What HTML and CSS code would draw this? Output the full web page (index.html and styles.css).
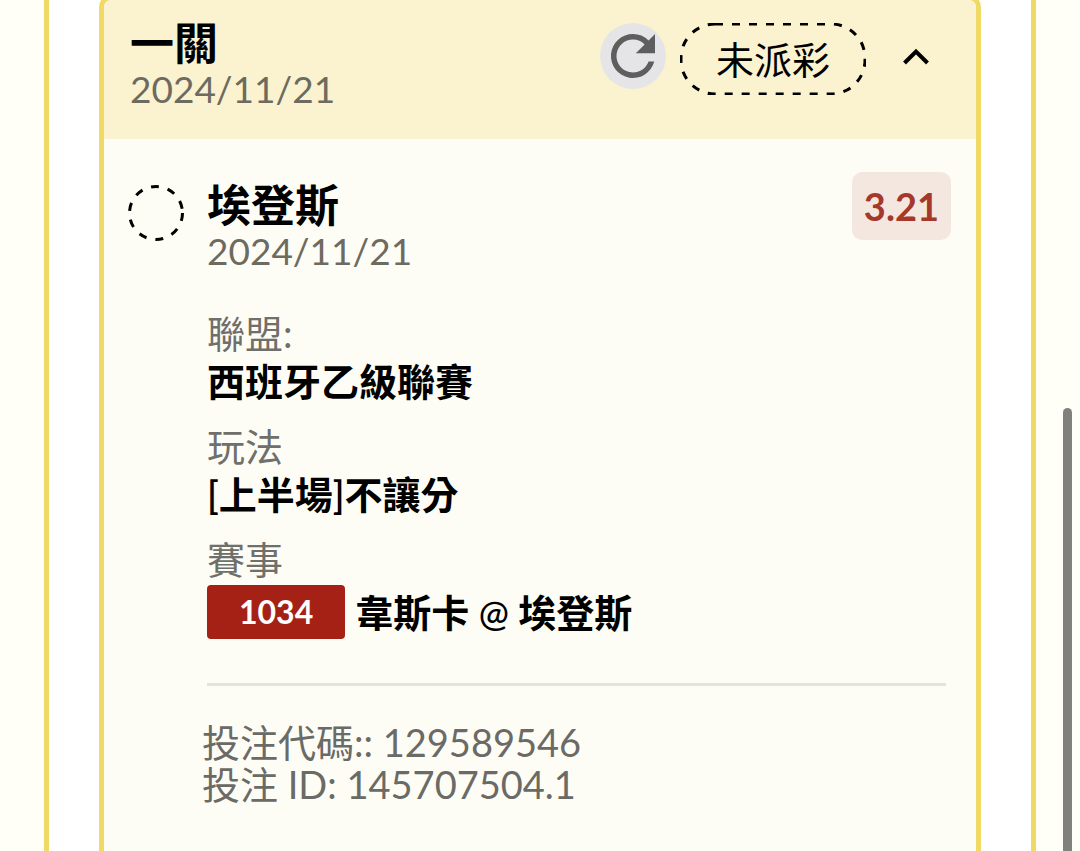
FILE: index.html
```html
<!DOCTYPE html>
<html lang="zh-Hant">
<head>
<meta charset="utf-8">
<meta name="viewport" content="width=device-width, initial-scale=1">
<title>一關</title>
<link rel="stylesheet" href="styles.css">
</head>
<body>
<main class="panel">
  <article class="card">
    <header class="card-head">
      <div class="heading">
        <h1 class="title">一關</h1>
        <p class="date">2024/11/21</p>
      </div>
      <div class="actions">
        <button class="refresh" type="button" aria-label="重新整理">
          <svg width="66" height="66" viewBox="0 0 24 24" aria-hidden="true">
            <path class="refresh-shape" d="M17.650 6.350A7.958 7.958 0 0 0 12 4a8 8 0 1 0 7.730 10h-2.080A6 6 0 1 1 12 6c1.660 0 3.140.69 4.220 1.780L13 11h7V4z"/>
          </svg>
        </button>
        <span class="status">
          <svg class="status-outline" aria-hidden="true"><rect class="dashes" x="1" y="1" rx="34" ry="34"/></svg>
          未派彩
        </span>
        <button class="toggle" type="button" aria-label="收合">
          <svg width="28" height="20" viewBox="0 0 28 20" aria-hidden="true"><path class="chevron" d="M2.500 16L14 4.500L25.500 16"/></svg>
        </button>
      </div>
    </header>
    <section class="bet">
      <svg class="pending" width="56" height="56" viewBox="0 0 56 56" aria-hidden="true"><circle class="pending-ring" cx="28" cy="28" r="26.500"/></svg>
      <div class="details">
        <div class="bet-head">
          <div class="heading">
            <h2 class="title">埃登斯</h2>
            <p class="date">2024/11/21</p>
          </div>
          <span class="odds">3.21</span>
        </div>
        <dl class="fields">
          <div class="field"><dt class="label">聯盟:</dt><dd class="value">西班牙乙級聯賽</dd></div>
          <div class="field"><dt class="label">玩法</dt><dd class="value">[上半場]不讓分</dd></div>
          <div class="field"><dt class="label">賽事</dt><dd class="value match"><span class="code">1034</span><span class="teams">韋斯卡 <span class="at">@</span> 埃登斯</span></dd></div>
        </dl>
        <hr class="rule">
        <div class="reference">
          <p class="line">投注代碼:: 129589546</p>
          <p class="line">投注 ID: 145707504.1</p>
        </div>
      </div>
    </section>
  </article>
</main>
<div class="scroll-thumb"></div>
</body>
</html>
```

FILE: styles.css
```css
* { box-sizing: border-box; }
html { background: #fffef7; }
body {
  margin: 0;
  background: #fffef7;
  color: #000;
  font-family: Lato, "Noto Sans CJK TC", sans-serif;
  font-size: 38px;
  overflow: hidden;
}
h1, h2, p, dl, dd { margin: 0; }
button { padding: 0; border: 0; background: none; color: inherit; }
svg { display: block; }

.panel {
  display: flex;
  flex-direction: column;
  min-height: 100vh;
  margin: 0 44px;
  padding: 0 50px;
  background: #fff;
  border: solid #f0d964;
  border-width: 0 5px;
}
.card {
  flex: 1;
  margin-top: -5px;
  background: #fefdf5;
  border: 5px solid #f0d964;
  border-bottom: 0;
  border-radius: 12px 12px 0 0;
}
.card-head {
  display: flex;
  align-items: flex-start;
  justify-content: space-between;
  padding: 20px 46px 28px 26px;
  background: #fbf2cf;
  border-radius: 7px 7px 0 0;
}
.title {
  font-size: 44px;
  line-height: 47px;
  font-weight: 600;
}
.date {
  font-size: 37px;
  line-height: 44px;
  color: #6d6a60;
}
.actions {
  display: flex;
  align-items: flex-start;
  padding-top: 3px;
}
.refresh {
  height: 66px;
  border-radius: 50%;
  background: #e5e5e7;
  margin-right: 14px;
}
.refresh-shape { fill: #5e5e5f; }
.status {
  position: relative;
  padding: 0 36px;
  line-height: 72px;
  margin-right: 36px;
}
.status-outline {
  position: absolute;
  inset: 0;
  width: 100%;
  height: 100%;
}
.dashes {
  width: calc(100% - 2px);
  height: calc(100% - 2px);
  fill: none;
  stroke: #000;
  stroke-width: 3;
  stroke-dasharray: 8 9;
}
.toggle { padding-top: 24px; }
.chevron { fill: none; stroke: #000; stroke-width: 4; }

.bet {
  display: flex;
  align-items: flex-start;
  gap: 23px;
  padding: 33px 25px 44px 24px;
}
.pending { margin-top: 13px; flex: none; }
.pending-ring { fill: none; stroke: #000; stroke-width: 3; stroke-dasharray: 8 9; }
.details { flex: 1; }
.bet-head {
  display: flex;
  justify-content: space-between;
  align-items: flex-start;
}
.bet-head .heading { padding-top: 10px; }
.odds {
  padding: 0 12px;
  line-height: 68px;
  font-weight: 700;
  color: #a3382b;
  background: #f4e7e0;
  border-radius: 10px;
}
.fields {
  display: flex;
  flex-direction: column;
  gap: 17px;
  margin-top: 36px;
}
.label { line-height: 48px; color: #6f6f6b; }
.value { line-height: 48px; font-weight: 600; }
.match {
  display: flex;
  align-items: center;
  gap: 10px;
  padding-top: 2px;
}
.code {
  padding: 0 32px;
  font-size: 32px;
  line-height: 54px;
  font-weight: 700;
  color: #fff;
  background: #a52116;
  border-radius: 4px;
}
.at { font-size: 36px; font-weight: 500; }
.rule {
  height: 3px;
  margin: 44px 5px 0 0;
  border: 0;
  background: #e3e3dc;
}
.reference {
  margin: 35px 0 0 -5px;
  color: #6a6a66;
}
.line { line-height: 42px; }
.scroll-thumb {
  position: fixed;
  top: 408px;
  right: 8px;
  bottom: -8px;
  width: 9px;
  border-radius: 5px;
  background: #80807c;
}
```
